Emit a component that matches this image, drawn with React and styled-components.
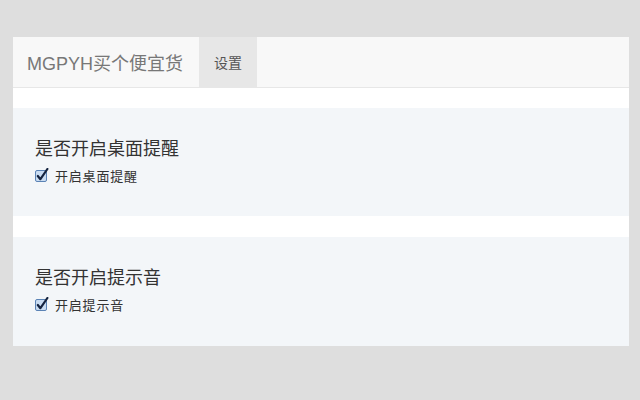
import React from 'react';
import styled, { createGlobalStyle } from 'styled-components';

const GlobalStyle = createGlobalStyle`
    html, body {
        margin:0;
        padding:0;
        background:#dedede;
        font-family: "Liberation Sans", "Noto Sans CJK SC", sans-serif;
        color:#333;
    }
`;

const Page = styled.div`
    width:640px;
    height:400px;
    padding:37px 11px 0 13px;
    box-sizing:border-box;
`;

const Panel = styled.div`
    background:#fff;
`;

const Navbar = styled.div`
    display:flex;
    height:50px;
    background:#f8f8f8;
    border-bottom:1px solid #e7e7e7;
`;

const Brand = styled.div`
    display:flex;
    align-items:center;
    padding:0 16px 0 14px;
    font-size:18px;
    color:#777;
`;

const Tab = styled.div`
    display:flex;
    align-items:center;
    padding:0 15px;
    font-size:14px;
    color:#555;
    background:${props => props.active ? '#e7e7e7' : 'transparent'};
`;

const Body = styled.div`
    padding-top:20px;
    display:flex;
    flex-direction:column;
    gap:21px;
`;

const Section = styled.div`
    background:#f3f6f9;
    padding:30px 22px 0;
    height:${props => props.h}px;
    box-sizing:border-box;
`;

const Title = styled.h3`
    margin:0 0 6px;
    font-size:18px;
    font-weight:normal;
    line-height:22px;
    color:#333;
`;

const Label = styled.label`
    display:flex;
    align-items:center;
    gap:6px;
    font-size:13px;
    letter-spacing:0.8px;
    color:#333;
`;

const Box = styled.svg`
    display:block;
    flex:none;
`;

const CheckBox = () => (
    <Box width="14" height="15" viewBox="0 0 14 15">
        <rect x="0.5" y="2.5" width="11" height="11" rx="1.5" fill="#c9dcf2" stroke="#5b83b5" />
        <path d="M2.8 8 L5.4 11.2 L12.4 1" fill="none" stroke="#14233f" strokeWidth="2.2" strokeLinecap="round" strokeLinejoin="round" />
    </Box>
);

const settings = [
    { title: '是否开启桌面提醒', label: '开启桌面提醒', h: 108 },
    { title: '是否开启提示音', label: '开启提示音', h: 109 },
];

const App = () => {
    return (
        <Page>
            <GlobalStyle />
            <Panel>
                <Navbar>
                    <Brand>MGPYH买个便宜货</Brand>
                    <Tab active>设置</Tab>
                </Navbar>
                <Body>
                    {settings.map((item, index) => {
                        return <Section key={index} h={item.h}>
                            <Title>{item.title}</Title>
                            <Label>
                                <CheckBox />
                                {item.label}
                            </Label>
                        </Section>
                    })}
                </Body>
            </Panel>
        </Page>
    )
}

export default App;
